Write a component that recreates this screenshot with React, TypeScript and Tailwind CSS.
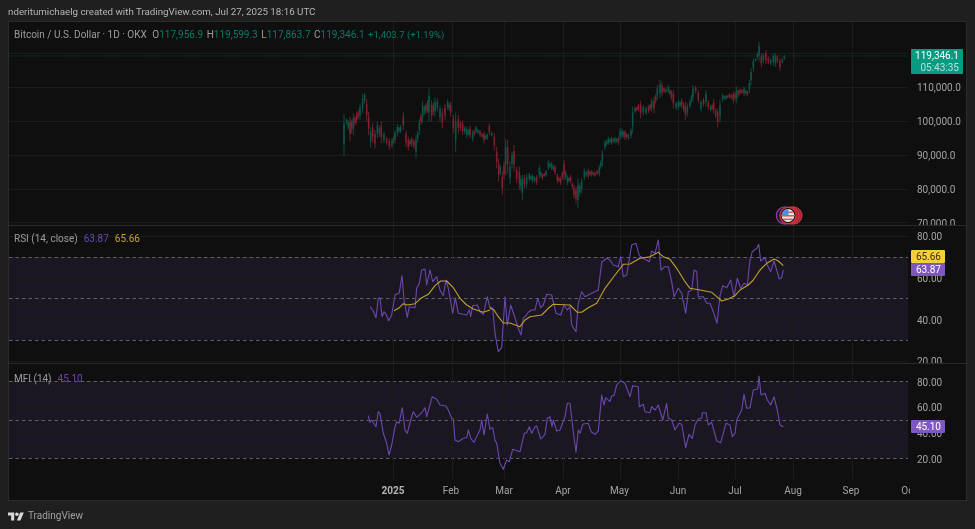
// Coordinates for the drawings were read off 3x crops, so the strings below are
// "x,y" at 3x and get mapped back to page pixels with an origin.
const priceA =
  "12,103,228,g 20,115,135,g 30,110,183,r 40,100,165,g 50,95,130,r 60,70,120,g 68,42,100,g 74,38,70,g 80,57,125,r 86,95,165,r 92,142,203,g 98,130,185,r 105,150,205,r 112,125,175,g 124,125,190,r 132,155,190,g 140,170,195,r 148,175,210,r 156,175,205,g 165,150,190,g 172,132,170,g 182,135,160,g 190,97,150,r 198,152,200,r 205,170,212,r 215,170,200,r 228,165,233,g 238,117,165,g 248,62,128,g 258,70,100,r 267,25,125,g 275,60,125,r 285,52,110,g 292,55,95,g 300,75,125,g 307,85,145,r 315,72,120,r 323,58,90,g 332,65,110,r 340,105,160,r 347,98,215,g 355,105,160,r 368,122,165,r 380,140,175,g 390,138,175,r 398,150,185,g 408,138,160,g 420,150,170,r 432,155,190,r 442,160,180,g 448,130,165,r 455,155,170,g 463,160,210,r 470,200,265,r 476,235,305,r 481,255,285,g 487,275,345,r 497,177,285,g 503,180,280,r 510,245,312,g 516,215,265,g 522,195,275,r 530,260,310,r 538,260,330,r 547,285,360,g 553,285,325,r 560,280,325,g 568,278,305,g 578,282,310,g 590,285,315,r 598,255,295,g 607,280,300,r 618,270,290,g 625,240,270,g 635,245,270,g 645,255,285,r 652,280,310,r 662,290,315,r 672,240,300,r 682,285,315,g 692,285,310,r 702,315,355,r 708,320,370,r 714,295,385,g 725,295,340,g 733,265,300,g 745,265,295,r 755,270,290,g 765,275,290,r 778,255,290,g 787,210,260,g 795,180,210,g 805,170,195,g 815,170,195,r 825,170,190,g 835,170,195,r";
const priceB =
  "60,295,330,g 66,295,325,g 75,300,330,r 85,310,330,g 93,295,325,g 98,230,310,g 105,230,250,g 115,222,245,r 122,212,265,r 130,225,255,g 138,230,255,g 146,225,250,r 155,205,245,g 162,200,250,r 172,165,210,g 180,150,205,g 186,155,200,r 198,175,190,g 205,165,190,g 214,180,210,r 220,180,235,r 228,215,240,g 235,210,240,g 245,205,235,r 256,215,270,r 262,220,260,g 270,208,235,g 279,165,215,g 287,168,190,r 295,180,220,r 303,210,245,g 318,180,230,g 325,210,240,r 332,225,245,g 341,208,250,r 347,235,265,r 353,235,292,r 360,210,278,g 368,190,215,g 378,195,210,g 388,190,205,r 400,185,220,r 410,170,220,g 420,175,195,r 432,170,198,g 442,180,198,r 448,150,190,g 453,115,165,g 460,85,125,g 467,85,95,g 477,35,95,g 484,70,112,r 490,70,100,g 498,60,102,r 505,80,102,r 512,85,105,g 520,70,108,g 526,70,110,g 532,75,100,r 540,85,122,r 547,85,100,g 553,75,90,g";

const rsiA =
  "1110,245 1120,258 1128,278 1135,220 1140,218 1146,275 1152,260 1158,268 1166,287 1175,270 1185,210 1198,203 1206,152 1212,225 1222,277 1228,245 1245,248 1250,190 1258,175 1265,135 1275,133 1280,180 1290,135 1298,170 1310,155 1320,195 1330,212 1338,165 1345,190 1358,265 1366,218 1375,265 1400,270 1408,255 1412,275 1418,242 1432,240 1440,260 1450,268 1462,215 1470,250";
const rsiB =
  "0,245 8,250 15,325 25,380 35,368 45,215 52,300 62,240 72,270 85,310 93,330 100,280 108,272 115,262 125,255 135,255 143,220 152,248 160,240 170,208 185,210 198,265 212,270 222,240 232,255 240,245 245,300 258,320 265,235 275,200 285,215 295,210 305,205 325,195 335,112 350,100 360,105 370,120 385,125 392,95 400,155 410,150 425,60 438,55 448,92 460,100 478,110 485,78 495,85 505,45 513,135 525,125 535,125 545,170 552,215 565,190 575,205 587,265 595,200 605,195 612,135 620,140 625,215 640,215 650,235 660,235 670,260 681,295 690,212 698,182 710,188 722,165 732,215 742,160 752,190 762,175 772,180 780,105 787,80 800,70 806,58 812,108 825,98 832,120 842,140 852,108 860,135 868,162 875,158 880,135";
const rsiMaA =
  "1182,257 1198,248 1210,236 1222,240 1245,236 1265,218 1285,208 1305,182 1322,168 1340,168 1360,188 1380,220 1400,240 1420,252 1450,262 1470,255";
const rsiMaB =
  "0,250 12,255 25,275 40,294 60,294 90,305 105,285 120,275 155,270 175,250 190,238 240,240 262,262 275,262 295,248 320,235 345,190 375,150 400,118 420,117 450,100 480,95 505,82 520,95 540,103 560,130 585,170 600,190 630,195 665,202 680,215 695,228 715,222 735,212 750,195 775,180 790,165 810,135 830,115 853,102 865,108 880,122";
const mfiA =
  "1105,152 1110,172 1115,165 1128,185 1135,140 1140,145 1150,205 1160,235 1167,270 1175,240 1185,185 1190,170 1197,175 1207,128 1215,195 1222,205 1232,165 1240,140 1250,157 1265,143 1275,128 1280,155 1297,95 1310,103 1320,120 1338,123 1345,135 1355,160 1360,162 1365,225 1375,230 1390,220 1400,218 1405,195 1412,220 1422,232 1440,195 1445,165 1452,210 1462,147 1470,195";
const mfiB =
  "0,190 8,188 15,225 20,235 30,295 40,313 50,285 58,290 68,253 90,260 103,205 110,203 118,185 125,205 135,185 140,183 152,222 165,208 172,160 180,155 186,185 190,165 200,198 210,195 225,155 232,115 240,115 250,200 258,262 265,195 270,205 278,178 295,175 303,200 315,208 325,198 335,90 342,120 347,98 360,110 365,92 372,92 380,60 392,47 405,55 420,95 428,62 445,65 448,125 460,118 465,140 480,143 485,125 495,135 505,120 518,165 530,115 535,160 545,165 555,195 567,175 575,178 587,248 597,208 607,220 615,180 625,162 635,160 637,143 648,143 655,180 665,172 680,228 692,233 708,175 720,180 727,215 735,205 740,165 755,135 762,88 770,130 780,128 790,75 803,72 807,33 813,90 825,85 832,105 842,120 852,95 862,135 870,180 880,185";

const monthLines = [393, 452, 504, 563, 620, 678, 735, 793, 852];
const GREEN = "#0c544a";
const RED = "#7d212c";
const PURPLE = "#6b48ad";

type Bar = { x: number; top: number; bottom: number; up: boolean };

function parseBars(src: string, ox: number, oy: number): Bar[] {
  return src.split(" ").map((item) => {
    const [x, t, b, c] = item.split(",");
    return { x: ox + Number(x) / 3, top: oy + Number(t) / 3, bottom: oy + Number(b) / 3, up: c === "g" };
  });
}

// fill the gaps between read-off bars so the series has about one candle per day
function withFillers(bars: Bar[]): Bar[] {
  const out: Bar[] = [];
  bars.forEach((bar, i) => {
    out.push(bar);
    const next = bars[i + 1];
    if (next && next.x - bar.x >= 3) {
      const top = (bar.top + next.top) / 2;
      const bottom = (bar.bottom + next.bottom) / 2;
      const pad = (bottom - top) * 0.2;
      out.push({ x: (bar.x + next.x) / 2, top: top + pad, bottom: bottom - pad, up: i % 3 === 0 ? !bar.up : bar.up });
    }
  });
  return out;
}

const candles = withFillers([...parseBars(priceA, 340, 80), ...parseBars(priceB, 600, 30)]);

function line(src: string, ox: number, oy: number) {
  return src
    .split(" ")
    .map((p) => {
      const [x, y] = p.split(",");
      return `${(ox + Number(x) / 3).toFixed(1)},${(oy + Number(y) / 3).toFixed(1)}`;
    })
    .join(" ");
}

function Grid({ top, bottom, rows }: { top: number; bottom: number; rows: number[] }) {
  return (
    <g stroke="#1b1b1b" strokeWidth="1">
      {monthLines.map((x) => (
        <line key={x} x1={x + 0.5} x2={x + 0.5} y1={top} y2={bottom} />
      ))}
      {rows.map((y) => (
        <line key={y} x1="9" x2="908" y1={y + 0.5} y2={y + 0.5} />
      ))}
    </g>
  );
}

function AxisLabels({ labels, offset }: { labels: { y: number; text: string }[]; offset: number }) {
  return (
    <>
      {labels.map((l) => (
        <span
          key={l.text}
          className="absolute left-[9px] -translate-y-1/2 text-[10px] leading-none text-[#a3a3a3]"
          style={{ top: l.y - offset + 1 }}
        >
          {l.text}
        </span>
      ))}
    </>
  );
}

function Band({ top, mid, bottom }: { top: number; mid: number; bottom: number }) {
  return (
    <>
      <rect x="9" y={top} width="899" height={bottom - top} fill="#1a1723" />
      <g stroke="#5f5f64" strokeWidth="1" strokeDasharray="3.5 3">
        <line x1="9" x2="908" y1={top + 0.5} y2={top + 0.5} />
        <line x1="9" x2="908" y1={mid + 0.5} y2={mid + 0.5} />
        <line x1="9" x2="908" y1={bottom + 0.5} y2={bottom + 0.5} />
      </g>
    </>
  );
}

function PricePane() {
  return (
    <div className="flex h-[203px]">
      <div className="relative w-[899px]">
        <svg viewBox="9 22 899 203" width="899" height="203" className="block">
          <Grid top={22} bottom={225} rows={[53, 87, 121, 155, 189, 222]} />
          <line x1="9" x2="908" y1="56" y2="56" stroke="#0f4a41" strokeDasharray="1 1.5" />
          {candles.map((c, i) => {
            const color = c.up ? GREEN : RED;
            const h = c.bottom - c.top;
            return (
              <g key={i}>
                <line x1={c.x} x2={c.x} y1={c.top} y2={c.bottom} stroke={color} strokeWidth="0.9" />
                <rect x={c.x - 0.8} y={c.top + h * 0.22} width="1.6" height={h * 0.5} fill={color} />
              </g>
            );
          })}
          {/* economic event marker */}
          <circle cx="793.5" cy="215.5" r="8.6" fill="#a52835" stroke="#d93444" strokeWidth="1" />
          <circle cx="790.5" cy="215.5" r="8.6" fill="#a52835" stroke="#d93444" strokeWidth="1" />
          <circle cx="785" cy="215.5" r="8.6" fill="#1a1220" stroke="#8a3fb0" strokeWidth="1.3" />
          <circle cx="788" cy="215.5" r="8.8" fill="#dc3545" />
          <circle cx="788" cy="215.5" r="7.5" fill="#111" />
          <clipPath id="flag">
            <circle cx="788" cy="215.5" r="6.4" />
          </clipPath>
          <g clipPath="url(#flag)">
            <rect x="781" y="209" width="14" height="13" fill="#f2f2f2" />
            <rect x="781" y="211.5" width="14" height="1.6" fill="#e0525c" />
            <rect x="781" y="215" width="14" height="1.6" fill="#e0525c" />
            <rect x="781" y="218.5" width="14" height="1.6" fill="#e0525c" />
            <rect x="781" y="209" width="7.5" height="6.5" fill="#4a90e2" />
          </g>
        </svg>
        <div className="absolute left-[5px] top-[6px] flex gap-[3.5px] text-[10px] leading-[13px] text-[#9c9c9c]">
          <span className="mr-[2px]">Bitcoin / U.S. Dollar · 1D · OKX</span>
          <span>
            O<span className="text-[#0b7a69]">117,956.9</span>
          </span>
          <span>
            H<span className="text-[#0b7a69]">119,599.3</span>
          </span>
          <span>
            L<span className="text-[#0b7a69]">117,863.7</span>
          </span>
          <span>
            C<span className="text-[#0b7a69]">119,346.1</span>
          </span>
          <span className="text-[9.5px] text-[#0b7a69]">+1,403.7 (+1.19%)</span>
        </div>
      </div>
      <div className="relative flex-1 overflow-hidden">
        <AxisLabels
          offset={22}
          labels={[
            { y: 53, text: "120,000.0" },
            { y: 86.5, text: "110,000.0" },
            { y: 120.5, text: "100,000.0" },
            { y: 154.5, text: "90,000.0" },
            { y: 188.5, text: "80,000.0" },
            { y: 222.5, text: "70,000.0" },
          ]}
        />
        <div className="absolute left-[3px] top-[27px] h-[25px] w-[52px] rounded-[1px] bg-[#089981] pr-[4px] pt-[1px] text-right text-[10px] leading-[11.5px]">
          <div className="text-white">119,346.1</div>
          <div className="text-[#b5e3da]">05:43:35</div>
        </div>
      </div>
    </div>
  );
}

function RsiPane() {
  return (
    <div className="flex h-[137px]">
      <div className="relative w-[899px]">
        <svg viewBox="9 226 899 137" width="899" height="137" className="block">
          <Band top={257} mid={298} bottom={340} />
          <Grid top={226} bottom={363} rows={[236, 278, 319, 361]} />
          <g fill="none" strokeLinejoin="round" strokeWidth="1.1">
            <polyline points={line(rsiA, 0, 225)} stroke={PURPLE} />
            <polyline points={line(rsiB, 490, 225)} stroke={PURPLE} />
            <polyline points={line(rsiMaA, 0, 225)} stroke="#c3a02b" />
            <polyline points={line(rsiMaB, 490, 225)} stroke="#c3a02b" />
          </g>
        </svg>
        <div className="absolute left-[5px] top-[6px] flex gap-[6px] text-[10px] leading-[13px] text-[#9c9c9c]">
          <span>RSI (14, close)</span>
          <span className="text-[#6b48ad]">63.87</span>
          <span className="text-[#c9a42a]">65.66</span>
        </div>
      </div>
      <div className="relative flex-1 overflow-hidden">
        <AxisLabels
          offset={226}
          labels={[
            { y: 236, text: "80.00" },
            { y: 278, text: "60.00" },
            { y: 319.5, text: "40.00" },
            { y: 361, text: "20.00" },
          ]}
        />
        <div className="absolute left-[3px] top-[24px] h-[13px] w-[34px] rounded-[1px] bg-[#f7cf3b] pr-[4px] text-right text-[10px] leading-[13px] text-[#3a3210]">
          65.66
        </div>
        <div className="absolute left-[3px] top-[37px] h-[13px] w-[34px] rounded-[1px] bg-[#7e57c2] pr-[4px] text-right text-[10px] leading-[13px] text-white">
          63.87
        </div>
      </div>
    </div>
  );
}

function MfiPane() {
  return (
    <div className="flex h-[115px]">
      <div className="relative w-[899px]">
        <svg viewBox="9 364 899 115" width="899" height="115" className="block">
          <Band top={381} mid={420} bottom={458} />
          <Grid top={364} bottom={479} rows={[407, 433]} />
          <g fill="none" strokeLinejoin="round" stroke={PURPLE} strokeWidth="1.1">
            <polyline points={line(mfiA, 0, 365)} />
            <polyline points={line(mfiB, 490, 365)} />
          </g>
        </svg>
        <div className="absolute left-[5px] top-[8px] flex gap-[6px] text-[10px] leading-[13px] text-[#9c9c9c]">
          <span>MFI (14)</span>
          <span className="text-[#6b48ad]">45.10</span>
        </div>
      </div>
      <div className="relative flex-1 overflow-hidden">
        <AxisLabels
          offset={364}
          labels={[
            { y: 381.5, text: "80.00" },
            { y: 407, text: "60.00" },
            { y: 433, text: "40.00" },
            { y: 459, text: "20.00" },
          ]}
        />
        <div className="absolute left-[3px] top-[56px] h-[13px] w-[34px] rounded-[1px] bg-[#7e57c2] pr-[4px] text-right text-[10px] leading-[13px] text-white">
          45.10
        </div>
      </div>
    </div>
  );
}

const timeLabels = [
  { x: 393, text: "2025", bold: true },
  { x: 451, text: "Feb" },
  { x: 504, text: "Mar" },
  { x: 563, text: "Apr" },
  { x: 619.5, text: "May" },
  { x: 678, text: "Jun" },
  { x: 735, text: "Jul" },
  { x: 793, text: "Aug" },
  { x: 851, text: "Sep" },
  { x: 909, text: "Oct" },
];

function TimeAxis() {
  return (
    <div className="flex h-[21px]">
      <div className="relative w-[901px] overflow-hidden">
        {timeLabels.map((t) => (
          <span
            key={t.text}
            className={`absolute top-[5px] -translate-x-1/2 text-[10px] leading-[13px] ${
              t.bold ? "font-bold text-[#b5b5b5]" : "text-[#a3a3a3]"
            }`}
            style={{ left: t.x - 9 }}
          >
            {t.text}
          </span>
        ))}
      </div>
    </div>
  );
}

export default function App() {
  return (
    <div className="flex h-[529px] w-[975px] flex-col overflow-hidden bg-[#1f1f1f] font-['Roboto',sans-serif] blur-[0.35px]">
      <div className="flex h-[21px] items-center px-[8px] pt-[3px] text-[9.75px] text-[#b5b5b5]">
        nderitumichaelg created with TradingView.com, Jul 27, 2025 18:16 UTC
      </div>
      <div className="mx-[8px] flex flex-col border border-[#2b2b2b] bg-[#0f0f0f]">
        <PricePane />
        <div className="h-px bg-[#2a2a2a]" />
        <RsiPane />
        <div className="h-px bg-[#2a2a2a]" />
        <MfiPane />
        <TimeAxis />
      </div>
      <div className="flex items-center gap-[4px] px-[8px] pt-[7px]">
        <svg viewBox="0 4 36 18" width="16" height="9" fill="#d8d8d8">
          <path d="M14 22H7V11H0V4h14v18zM28 22h-8l7.5-18h8L28 22z" />
          <circle cx="20" cy="8" r="4" />
        </svg>
        <span className="text-[10px] leading-[16px] text-[#a0a0a0]">TradingView</span>
      </div>
    </div>
  );
}
